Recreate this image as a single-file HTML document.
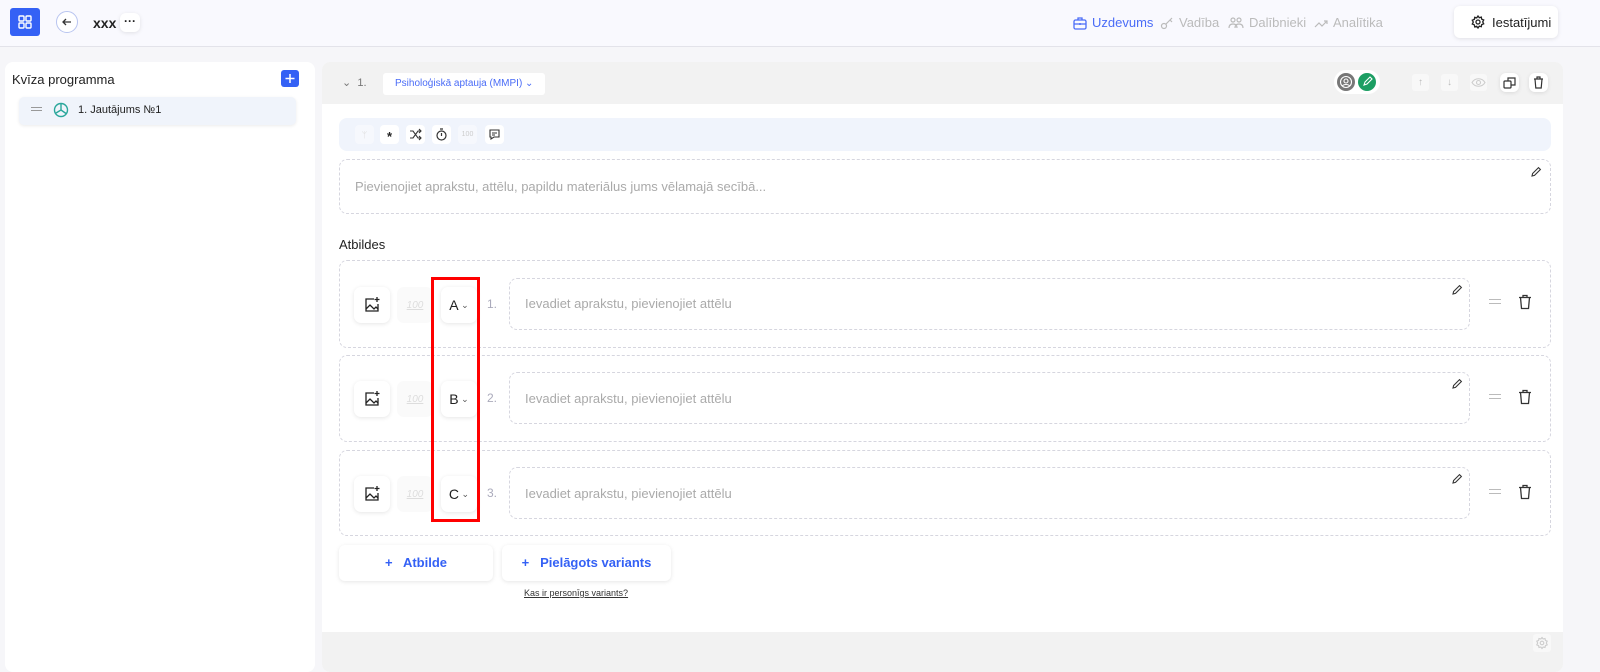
<!DOCTYPE html>
<html><head><meta charset="utf-8"><style>
*{box-sizing:border-box;margin:0;padding:0}
body{width:1600px;height:672px;overflow:hidden;background:#f6f6f9;font-family:"Liberation Sans",sans-serif;position:relative;color:#222}
.abs{position:absolute}
.hdr{left:0;top:0;width:1600px;height:47px;background:#f9f9fe;border-bottom:1px solid #e3e3ea}
.btnw{background:#fff;border-radius:6px;box-shadow:0 1px 4px rgba(0,0,0,.1)}
.nav{font-size:13px;color:#bbb;top:15px;display:flex;align-items:center;gap:5px}
.dash{border:1px dashed #d6d6df;border-radius:8px}
.ico{width:36px;height:36px;background:#fff;border-radius:7px;box-shadow:0 1px 4px rgba(0,0,0,.1);display:flex;align-items:center;justify-content:center}
.tb{width:19px;height:19px;background:#fff;border-radius:4px;display:flex;align-items:center;justify-content:center;font-size:11px}
svg{display:block}
</style></head><body>
<div class="abs hdr"></div>
<div class="abs" style="left:10px;top:8px;width:30px;height:28px;background:#3461f5;border-radius:3px"><svg width="30" height="28"><g fill="none" stroke="#fff" stroke-width="1.4"><rect x="9" y="8" width="5" height="5" rx="1"/><rect x="16" y="8" width="5" height="5" rx="1"/><rect x="9" y="15" width="5" height="5" rx="1"/><rect x="16" y="15" width="5" height="5" rx="1"/></g></svg></div>
<div class="abs" style="left:56px;top:11px;width:22px;height:22px;border:1px solid #b8c4f0;border-radius:50%;background:#fff"><svg width="20" height="20"><path d="M14 10H6M9 7l-3 3 3 3" fill="none" stroke="#333" stroke-width="1.3"/></svg></div>
<div class="abs" style="left:93px;top:15px;font-size:14px;font-weight:bold">xxx</div>
<div class="abs btnw" style="left:120px;top:13px;width:20px;height:19px;text-align:center;font-size:12px;line-height:16px;font-weight:bold">···</div>
<div class="abs nav" style="left:1073px;color:#4a6cf7"><svg width="14" height="14"><g fill="none" stroke="#4a6cf7" stroke-width="1.3"><rect x="1" y="4" width="12" height="9" rx="1.5"/><path d="M5 4V2h4v2M1 8h12M7 7v2"/></g></svg>Uzdevums</div>
<div class="abs nav" style="left:1160px"><svg width="14" height="14"><g fill="none" stroke="#bbb" stroke-width="1.2"><circle cx="4" cy="10" r="2.5"/><path d="M6 8l6-6M10 4l2 2"/></g></svg>Vadība</div>
<div class="abs nav" style="left:1228px"><svg width="16" height="14"><g fill="none" stroke="#bbb" stroke-width="1.2"><circle cx="5" cy="4" r="2"/><circle cx="11" cy="4" r="2"/><path d="M1 12c0-3 2-4 4-4s4 1 4 4M7 12c0-3 2-4 4-4s4 1 4 4"/></g></svg>Dalībnieki</div>
<div class="abs nav" style="left:1314px"><svg width="14" height="14"><path d="M1 11l4-4 3 3 5-5M10 5h3v3" fill="none" stroke="#bbb" stroke-width="1.2"/></svg>Analītika</div>
<div class="abs btnw" style="left:1454px;top:6px;width:104px;height:32px;font-size:13px;display:flex;align-items:center;gap:7px;padding-left:17px"><svg width="14" height="14"><g fill="none" stroke="#222" stroke-width="1.3"><circle cx="7" cy="7" r="2"/><path d="M7 1l1.3 1.7 2-.6.4 2.1 2 .8-1 1.9 1 1.9-2 .8-.4 2.1-2-.6L7 13l-1.3-1.7-2 .6-.4-2.1-2-.8 1-1.9-1-1.9 2-.8.4-2.1 2 .6z"/></g></svg>Iestatījumi</div>

<div class="abs" style="left:5px;top:62px;width:310px;height:610px;background:#fff;border-radius:8px"></div>
<div class="abs" style="left:12px;top:72px;font-size:13px">Kvīza programma</div>
<div class="abs" style="left:281px;top:70px;width:18px;height:17px;background:#3461f5;border-radius:3px"><svg width="18" height="17"><path d="M9 4v9M4.5 8.5h9" stroke="#fff" stroke-width="1.5"/></svg></div>
<div class="abs" style="left:19px;top:97px;width:277px;height:28px;background:#f0f4fb;border-radius:5px;box-shadow:0 1px 3px rgba(0,0,0,.08)"></div>
<div class="abs" style="left:31px;top:107px;width:11px;height:4px;border-top:1px solid #999;border-bottom:1px solid #999"></div>
<div class="abs" style="left:53px;top:102px"><svg width="16" height="16"><g fill="none" stroke="#2aa79b" stroke-width="1.4"><circle cx="8" cy="8" r="6.5"/><path d="M8 1.5V8l5 3.5M8 8l-5 3"/></g></svg></div>
<div class="abs" style="left:78px;top:104px;font-size:11px">1. Jautājums №1</div>

<div class="abs" style="left:322px;top:62px;width:1241px;height:610px;background:#fff;border-radius:8px;overflow:hidden">
<div class="abs" style="left:0;top:0;width:1241px;height:42px;background:#f2f2f2"></div>
<div class="abs" style="left:0;top:570px;width:1241px;height:40px;background:#f2f2f2"></div>
</div>
<div class="abs" style="left:342px;top:76px;font-size:11px;color:#777">⌄ &nbsp;1.</div>
<div class="abs" style="left:383px;top:73px;width:162px;height:22px;background:#fff;border-radius:3px;font-size:10px;color:#4a6cf7;line-height:22px;padding-left:12px">Psiholoģiskā aptauja (MMPI) ⌄</div>
<div class="abs" style="left:1334px;top:70px;width:46px;height:24px;background:#fff;border-radius:12px"></div>
<div class="abs" style="left:1337px;top:73px;width:18px;height:18px;border-radius:50%;background:#777"><svg width="18" height="18"><g fill="none" stroke="#fff" stroke-width="1.1"><circle cx="9" cy="9" r="5.5"/><circle cx="9" cy="8" r="2"/><path d="M5.5 13c1-2 6-2 7 0"/></g></svg></div>
<div class="abs" style="left:1358px;top:73px;width:18px;height:18px;border-radius:50%;background:#1c9e63"><svg width="18" height="18"><path d="M6 12l1-3 5-5 2 2-5 5z" fill="none" stroke="#fff" stroke-width="1.1"/></svg></div>
<div class="abs" style="left:1412px;top:74px;width:17px;height:17px;background:#f8f8f8;border-radius:3px;font-size:10px;color:#bbb;text-align:center;line-height:17px">↑</div>
<div class="abs" style="left:1441px;top:74px;width:17px;height:17px;background:#f8f8f8;border-radius:3px;font-size:10px;color:#bbb;text-align:center;line-height:17px">↓</div>
<div class="abs" style="left:1470px;top:74px;width:17px;height:17px;background:#f8f8f8;border-radius:3px"><svg width="17" height="17"><g fill="none" stroke="#ccc" stroke-width="1.1"><path d="M2 8.5c3-5 10-5 13 0-3 5-10 5-13 0z"/><circle cx="8.5" cy="8.5" r="2"/></g></svg></div>
<div class="abs btnw" style="left:1500px;top:73px;width:19px;height:19px"><svg width="19" height="19"><g fill="none" stroke="#333" stroke-width="1.2"><rect x="4" y="8" width="7" height="7" rx="1"/><path d="M8 8V5h7v7h-4"/></g></svg></div>
<div class="abs btnw" style="left:1529px;top:73px;width:19px;height:19px"><svg width="19" height="19"><g fill="none" stroke="#333" stroke-width="1.2"><path d="M5 6h9M8 6V4h3v2M6 6l.8 9h5.4L13 6"/></g></svg></div>

<div class="abs" style="left:339px;top:118px;width:1212px;height:33px;background:#f0f4fc;border-radius:8px"></div>
<div class="abs tb" style="left:355px;top:125px;background:#f6f8fd;color:#ddd;font-size:9px">ᛘ</div>
<div class="abs tb" style="left:380px;top:125px;font-weight:bold;font-size:13px;padding-top:4px">*</div>
<div class="abs tb" style="left:406px;top:125px"><svg width="13" height="13"><path d="M1 3h3l5 7h3M1 10h3l5-7h3M10 1l2 2-2 2M10 8l2 2-2 2" fill="none" stroke="#333" stroke-width="1.1"/></svg></div>
<div class="abs tb" style="left:432px;top:125px"><svg width="13" height="13"><g fill="none" stroke="#333" stroke-width="1.2"><circle cx="6.5" cy="7.5" r="4.5"/><path d="M6.5 5v3M5 1h3"/></g></svg></div>
<div class="abs tb" style="left:458px;top:125px;background:#f6f8fd;color:#ccc;font-size:7px">100</div>
<div class="abs tb" style="left:485px;top:125px"><svg width="13" height="13"><path d="M2 2h9v7H6l-3 2V9H2z M4 5h5M4 7h3" fill="none" stroke="#333" stroke-width="1.1"/></svg></div>

<div class="abs dash" style="left:339px;top:159px;width:1212px;height:55px"></div>
<div class="abs" style="left:355px;top:179px;font-size:13px;color:#aaa">Pievienojiet aprakstu, attēlu, papildu materiālus jums vēlamajā secībā...</div>
<div class="abs" style="left:1530px;top:166px"><svg width="12" height="12"><path d="M2 10l.6-2.5L8.5 1.6l1.9 1.9-5.9 5.9z" fill="none" stroke="#333" stroke-width="1.1"/></svg></div>
<div class="abs" style="left:339px;top:237px;font-size:13px">Atbildes</div>

<div class="abs dash" style="left:339px;top:260px;width:1212px;height:88px"></div>
<div class="abs dash" style="left:339px;top:355px;width:1212px;height:87px"></div>
<div class="abs dash" style="left:339px;top:450px;width:1212px;height:86px"></div>

<!-- rows -->
<div id="rows"></div>
<div class="abs ico" style="left:354px;top:287px"><svg width="18" height="18"><g fill="none" stroke="#222" stroke-width="1.3"><path d="M11 3H3v12h12V8"/><path d="M3 13l4-4 4 4 2-2 2 2"/><path d="M14 1v5M11.5 3.5h5"/></g></svg></div><div class="abs ico" style="left:397px;top:287px;box-shadow:none;background:#fafafa;color:#ddd;font-size:10px;font-style:italic;text-decoration:underline">100</div><div class="abs ico" style="left:441px;top:287px;font-size:14px">A<span style="font-size:9px;color:#555">&nbsp;⌄</span></div><div class="abs" style="left:487px;top:297px;font-size:12px;color:#aab">1.</div><div class="abs dash" style="left:509px;top:278px;width:961px;height:52px"></div><div class="abs" style="left:525px;top:296px;font-size:13px;color:#aaa">Ievadiet aprakstu, pievienojiet attēlu</div><div class="abs" style="left:1451px;top:284px"><svg width="12" height="12"><path d="M2 10l.6-2.5L8.5 1.6l1.9 1.9-5.9 5.9z" fill="none" stroke="#333" stroke-width="1.1"/></svg></div><div class="abs" style="left:1489px;top:299px;width:12px;height:5px;border-top:1.5px solid #bbb;border-bottom:1.5px solid #bbb"></div><div class="abs" style="left:1516px;top:293px"><svg width="18" height="18"><g fill="none" stroke="#333" stroke-width="1.3"><path d="M3 4.5h12M7 4.5V2.5h4v2M4.5 4.5l1 11h7l1-11"/></g></svg></div>

<div class="abs ico" style="left:354px;top:381px"><svg width="18" height="18"><g fill="none" stroke="#222" stroke-width="1.3"><path d="M11 3H3v12h12V8"/><path d="M3 13l4-4 4 4 2-2 2 2"/><path d="M14 1v5M11.5 3.5h5"/></g></svg></div><div class="abs ico" style="left:397px;top:381px;box-shadow:none;background:#fafafa;color:#ddd;font-size:10px;font-style:italic;text-decoration:underline">100</div><div class="abs ico" style="left:441px;top:381px;font-size:14px">B<span style="font-size:9px;color:#555">&nbsp;⌄</span></div><div class="abs" style="left:487px;top:391px;font-size:12px;color:#aab">2.</div><div class="abs dash" style="left:509px;top:372px;width:961px;height:52px"></div><div class="abs" style="left:525px;top:391px;font-size:13px;color:#aaa">Ievadiet aprakstu, pievienojiet attēlu</div><div class="abs" style="left:1451px;top:378px"><svg width="12" height="12"><path d="M2 10l.6-2.5L8.5 1.6l1.9 1.9-5.9 5.9z" fill="none" stroke="#333" stroke-width="1.1"/></svg></div><div class="abs" style="left:1489px;top:394px;width:12px;height:5px;border-top:1.5px solid #bbb;border-bottom:1.5px solid #bbb"></div><div class="abs" style="left:1516px;top:388px"><svg width="18" height="18"><g fill="none" stroke="#333" stroke-width="1.3"><path d="M3 4.5h12M7 4.5V2.5h4v2M4.5 4.5l1 11h7l1-11"/></g></svg></div>

<div class="abs ico" style="left:354px;top:476px"><svg width="18" height="18"><g fill="none" stroke="#222" stroke-width="1.3"><path d="M11 3H3v12h12V8"/><path d="M3 13l4-4 4 4 2-2 2 2"/><path d="M14 1v5M11.5 3.5h5"/></g></svg></div><div class="abs ico" style="left:397px;top:476px;box-shadow:none;background:#fafafa;color:#ddd;font-size:10px;font-style:italic;text-decoration:underline">100</div><div class="abs ico" style="left:441px;top:476px;font-size:14px">C<span style="font-size:9px;color:#555">&nbsp;⌄</span></div><div class="abs" style="left:487px;top:486px;font-size:12px;color:#aab">3.</div><div class="abs dash" style="left:509px;top:467px;width:961px;height:52px"></div><div class="abs" style="left:525px;top:486px;font-size:13px;color:#aaa">Ievadiet aprakstu, pievienojiet attēlu</div><div class="abs" style="left:1451px;top:473px"><svg width="12" height="12"><path d="M2 10l.6-2.5L8.5 1.6l1.9 1.9-5.9 5.9z" fill="none" stroke="#333" stroke-width="1.1"/></svg></div><div class="abs" style="left:1489px;top:489px;width:12px;height:5px;border-top:1.5px solid #bbb;border-bottom:1.5px solid #bbb"></div><div class="abs" style="left:1516px;top:483px"><svg width="18" height="18"><g fill="none" stroke="#333" stroke-width="1.3"><path d="M3 4.5h12M7 4.5V2.5h4v2M4.5 4.5l1 11h7l1-11"/></g></svg></div>

<div class="abs" style="left:431px;top:277px;width:49px;height:245px;border:3px solid #f00"></div>

<div class="abs btnw" style="left:339px;top:545px;width:154px;height:36px;color:#3461f5;font-size:13px;font-weight:bold;text-align:center;line-height:36px">+ &nbsp; Atbilde</div>
<div class="abs btnw" style="left:502px;top:545px;width:169px;height:36px;color:#3461f5;font-size:13px;font-weight:bold;text-align:center;line-height:36px">+ &nbsp; Pielāgots variants</div>
<div class="abs" style="left:524px;top:588px;font-size:9px;text-decoration:underline;color:#333">Kas ir personīgs variants?</div>
<div class="abs" style="left:1533px;top:634px;width:18px;height:18px;background:#f8f8f8;border-radius:3px"><svg width="18" height="18"><g fill="none" stroke="#ccc" stroke-width="1.1"><circle cx="9" cy="9" r="1.8"/><path d="M9 3.5l1.2 1.5 1.8-.5.4 1.9 1.8.8-.9 1.8.9 1.8-1.8.8-.4 1.9-1.8-.5L9 14.5l-1.2-1.5-1.8.5-.4-1.9-1.8-.8.9-1.8-.9-1.8 1.8-.8.4-1.9 1.8.5z"/></g></svg></div>
</body></html>
